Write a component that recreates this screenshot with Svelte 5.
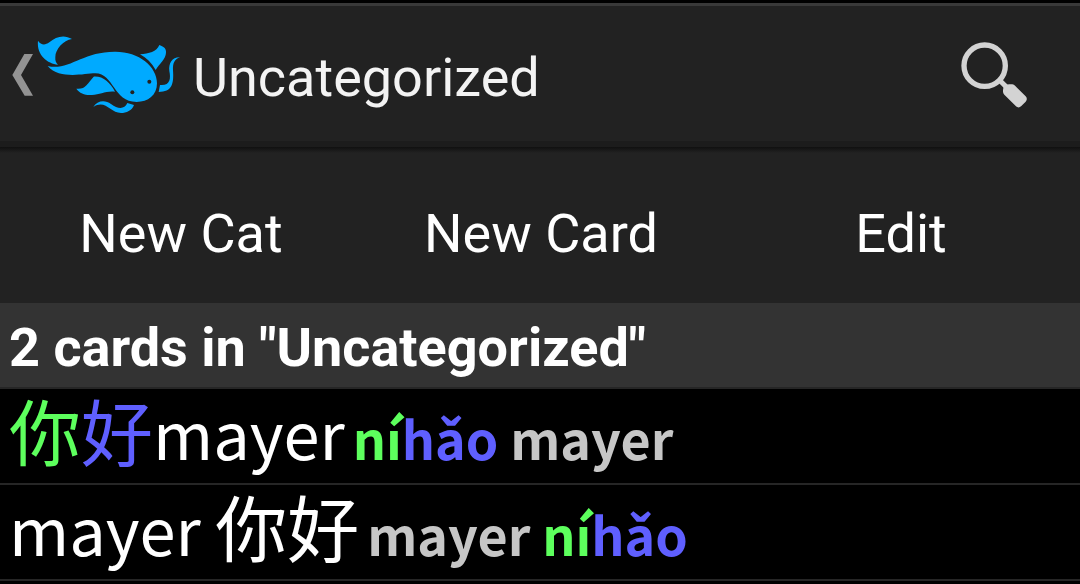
<script lang="ts">
  interface Part {
    text: string;
    tone?: string;
    han?: boolean;
  }

  interface Card {
    word: Part[];
    reading: Part[];
  }

  const category = 'Uncategorized';
  const actions: string[] = ['New Cat', 'New Card', 'Edit'];

  const cards: Card[] = [
    {
      word: [{ text: '你', tone: 'green', han: true }, { text: '好', tone: 'blue', han: true }, { text: 'mayer' }],
      reading: [{ text: 'ní', tone: 'green' }, { text: 'hǎo', tone: 'blue' }, { text: ' mayer' }]
    },
    {
      word: [{ text: 'mayer ' }, { text: '你好', han: true }],
      reading: [{ text: 'mayer ' }, { text: 'ní', tone: 'green' }, { text: 'hǎo', tone: 'blue' }]
    }
  ];
</script>

<div class="screen">
  <header class="action-bar">
    <button class="up" aria-label="Back">
      <svg class="chevron" viewBox="37 102 66 126" aria-hidden="true">
        <path d="M74 102H100L64 165L100 227H75L38 165Z" />
      </svg>
      <svg class="logo" viewBox="108 39 435 246" aria-hidden="true">
        <path d="M114 62C123 75 134 77 148 67C168 49 193 43 216 57C190 61 166 88 166 111C165 122 168 128 174 134C143 131 109 105 114 62Z" />
        <path d="M143 138C207 153 246 95 344 95C416 94 471 139 471 190C471 226 444 246 410 246C339 246 342 160 286 160C249 161 178 179 143 138Z" />
        <path d="M420 103C447 100 470 96 478 75C493 80 499 87 498 98C497 118 480 128 467 150C455 129 440 114 420 103Z" />
        <path d="M229 206C257 209 261 191 281 170C309 168 330 187 345 215C317 212 300 224 276 225C258 227 239 221 229 206Z" />
        <path d="M540 112C524 117 518 129 519 151C522 192 516 216 476 216L480 195C510 198 513 177 508 153C505 130 517 111 540 112Z" />
        <path d="M280 261C291 242 315 239 333 252C355 268 373 268 382 249L402 255C396 272 379 279 363 279C331 279 316 237 280 261Z" />
        <circle class="eye" cx="448" cy="185" r="6" />
        <circle class="eye" cx="397" cy="217" r="6" />
      </svg>
    </button>
    <h1>{category}</h1>
    <button class="search" aria-label="Search">
      <svg viewBox="60 45 207 207" aria-hidden="true">
        <circle cx="134" cy="122" r="62" />
        <path class="neck" d="M178 165L200 187" />
        <path class="handle" d="M189 195Q190 179 207 178L217 178Q222 179 226 183L257 214Q264 222 257 230L244 243Q236 251 228 244L193 209Q189 205 189 200Z" />
      </svg>
    </button>
  </header>

  <nav class="actions">
    {#each actions as action}
      <button>{action}</button>
    {/each}
  </nav>

  <h2>{cards.length} cards in "{category}"</h2>

  <ul class="cards">
    {#each cards as card}
      <li>
        <span class="word">{#each card.word as part}<span class={part.tone} class:han={part.han}>{part.text}</span>{/each}</span>
        <span class="reading">{#each card.reading as part}<span class={part.tone}>{part.text}</span>{/each}</span>
      </li>
    {/each}
  </ul>
</div>

<style>
  :global(body) {
    background: #000;
  }

  .screen {
    font-family: Roboto, "Liberation Sans", sans-serif;
    font-size: 54px;
    color: #fff;
    padding-top: 3px;
    overflow: hidden;
  }

  button {
    font: inherit;
    color: inherit;
    background: none;
    border: none;
    padding: 0;
    cursor: pointer;
  }

  svg {
    display: block;
  }

  .action-bar {
    display: flex;
    align-items: center;
    height: 135px;
    padding: 0 51px 0 12px;
    background: #222;
    border-top: 3px solid #393939;
    border-bottom: 6px solid #1c1c1c;
  }

  .up {
    display: flex;
    align-items: center;
    gap: 2px;
  }

  .chevron {
    width: 22px;
    height: 42px;
    margin-top: 2px;
    fill: #939393;
  }

  .logo {
    width: 145px;
    height: 82px;
    fill: #0af;
  }

  .logo .eye {
    fill: #222;
  }

  h1 {
    flex: 1;
    margin: 0 0 0 12px;
    padding-top: 8px;
    font-size: 54px;
    font-weight: 400;
    line-height: 64px;
    color: #f3f3f3;
  }

  .search svg {
    width: 69px;
    height: 69px;
    margin-top: 2px;
    fill: #d3d3d3;
  }

  .search circle {
    fill: none;
    stroke: #d3d3d3;
    stroke-width: 16;
  }

  .search .neck {
    stroke: #d3d3d3;
    stroke-width: 15;
  }

  .actions {
    display: grid;
    grid-template-columns: repeat(3, 1fr);
    height: 156px;
    background: linear-gradient(#101010, #222 6px);
  }

  .actions button {
    padding: 16px 0 0 2px;
  }

  h2 {
    margin: 0;
    padding: 13px 9px 7px;
    font-size: 54px;
    font-weight: 700;
    line-height: 64px;
    background: #333;
    border-bottom: 2px solid #262626;
  }

  .cards {
    list-style: none;
    margin: 0;
    padding: 0;
    font-family: "Noto Sans CJK SC", "Noto Sans", sans-serif;
  }

  li {
    display: flex;
    align-items: baseline;
    gap: 8px;
    height: 94px;
    padding: 0 9px;
    line-height: 80px;
    white-space: pre;
    border-bottom: 2px solid #262626;
  }

  .word {
    font-size: 65px;
  }

  .han {
    font-size: 72px;
  }

  .reading {
    font-size: 52px;
    font-weight: 700;
    color: #c6c6c6;
  }

  .green {
    color: #5dff5d;
  }

  .blue {
    color: #5f5fff;
  }
</style>
